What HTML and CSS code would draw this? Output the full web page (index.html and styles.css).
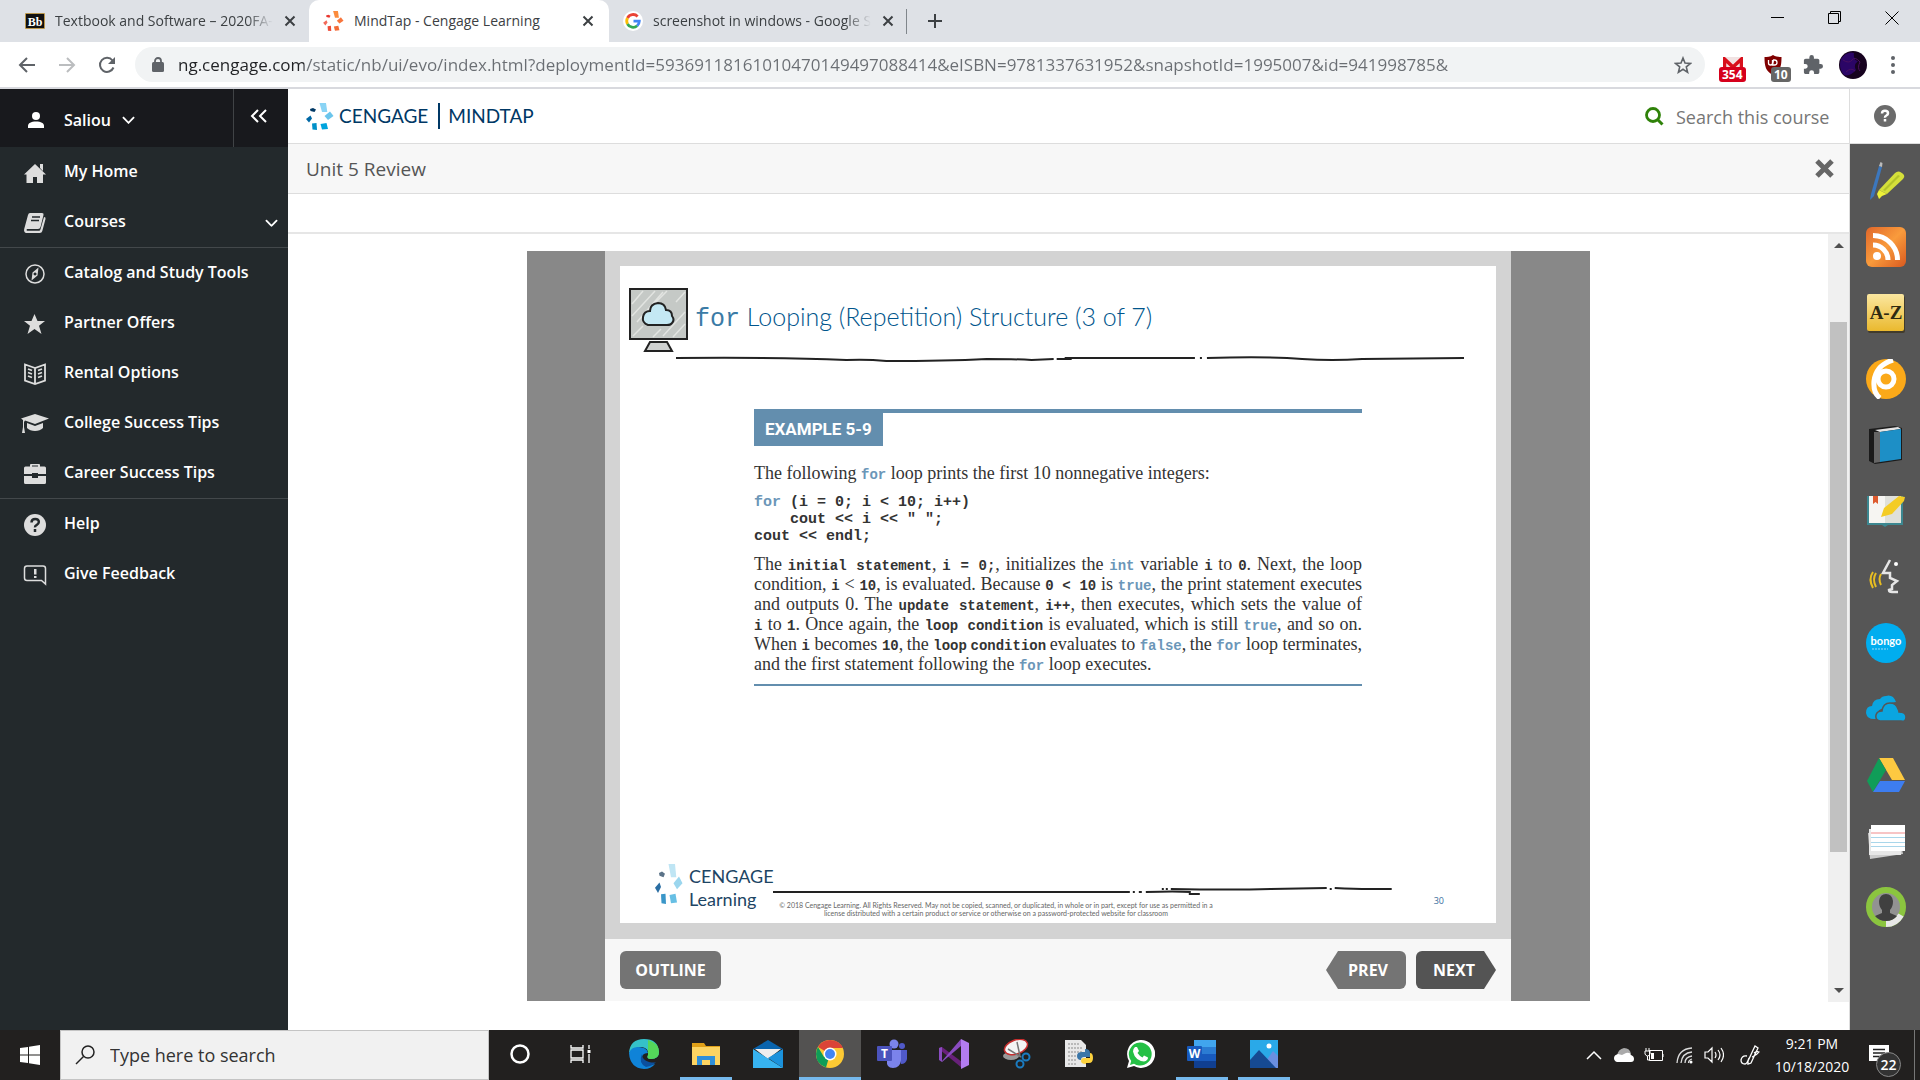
FILE: index.html
```html
<!DOCTYPE html>
<html lang="en">
<head>
<meta charset="utf-8">
<title>MindTap - Cengage Learning</title>
<link rel="stylesheet" href="styles.css">
</head>
<body>
<svg class="defs" width="0" height="0" aria-hidden="true">
  <symbol id="swirl" viewBox="0 0 28 27">
    <path class="s1" d="M13.5 0h6.500l1.300 9h-5.300z"/><path class="s2" d="M18.500 13l5.500-4.500 3.500 4.500-5.500 4z"/>
    <path class="s3" d="M14.500 21l6-1 1.500 6-6 .5z"/><path class="s4" d="M6 20.500l4.500-.5.5 7-4.500-.5z"/>
    <path class="s5" d="M0 16l4.500-3.500 1.500 3-3 4z"/><path class="s6" d="M4 6l3-1 3 1.500-1.500 2.500-4-1z"/>
  </symbol>
  <symbol id="x" viewBox="0 0 12 12"><path d="M1.500 1.500l9 9m0-9l-9 9" fill="none" stroke="currentColor" stroke-width="2"/></symbol>
  <symbol id="chev" viewBox="0 0 14 8"><path d="M1 1l6 6 6-6" fill="none" stroke="currentColor" stroke-width="2"/></symbol>
</svg>

<header class="browser">
  <div class="tabs">
    <div class="tab first">
      <svg class="fav" width="20" height="16" viewBox="0 0 20 16"><rect width="20" height="16" rx="1" fill="#b9964b"/><rect x="1" y="1" width="18" height="14" fill="#111"/><text x="10" y="12.500" text-anchor="middle" font-family="Liberation Serif" font-weight="700" font-size="12" fill="#fff">Bb</text></svg>
      <span class="tab-name fade">Textbook and Software – 2020FA-</span>
      <button class="tab-x" aria-label="Close tab"><svg width="12" height="12"><use href="#x"/></svg></button>
    </div>
    <div class="tab active">
      <svg class="fav orange" width="21" height="20"><use href="#swirl"/></svg>
      <span class="tab-name">MindTap - Cengage Learning</span>
      <button class="tab-x" aria-label="Close tab"><svg width="12" height="12"><use href="#x"/></svg></button>
    </div>
    <div class="tab third">
      <svg class="fav" width="20" height="20" viewBox="0 0 20 20"><circle cx="10" cy="10" r="10" fill="#fff"/><g fill="none" stroke-width="2.800"><path d="M14.600 5.400A6.300 6.300 0 0 0 4.500 7" stroke="#ea4335"/><path d="M4.500 7a6.300 6.300 0 0 0 0 6" stroke="#fbbc05"/><path d="M4.500 13a6.300 6.300 0 0 0 9.700 1.700" stroke="#34a853"/><path d="M14.200 14.700A6.300 6.300 0 0 0 16.300 10.200H10.500" stroke="#4285f4"/></g></svg>
      <span class="tab-name fade">screenshot in windows - Google S</span>
      <button class="tab-x" aria-label="Close tab"><svg width="12" height="12"><use href="#x"/></svg></button>
    </div>
    <button class="new-tab" aria-label="New tab"><svg width="16" height="16" viewBox="0 0 16 16"><path d="M8 1v14M1 8h14" stroke="#3c4043" stroke-width="2"/></svg></button>
    <div class="win">
      <button aria-label="Minimize"><svg width="14" height="14" viewBox="0 0 14 14"><path d="M0 6.500h13" stroke="#000"/></svg></button>
      <button aria-label="Restore"><svg width="14" height="14" viewBox="0 0 14 14"><path d="M.5 2.500h10v10H.5zM2.500 2V.5h10v10H11" fill="none" stroke="#000"/></svg></button>
      <button aria-label="Close"><svg width="14" height="14" viewBox="0 0 14 14"><path d="M.5.5l13 13m0-13l-13 13" stroke="#000"/></svg></button>
    </div>
  </div>
  <div class="toolbar">
    <button class="nav" aria-label="Back"><svg width="18" height="16" viewBox="0 0 18 16"><path d="M17 8H2m7-7L2 8l7 7" fill="none" stroke="#5f6368" stroke-width="2"/></svg></button>
    <button class="nav" aria-label="Forward"><svg width="18" height="16" viewBox="0 0 18 16"><path d="M1 8h15M9 1l7 7-7 7" fill="none" stroke="#bbbdbf" stroke-width="2"/></svg></button>
    <button class="nav" aria-label="Reload"><svg width="18" height="18" viewBox="0 0 18 18"><path d="M15.500 11.500A7 7 0 1 1 14.500 4.500" fill="none" stroke="#5f6368" stroke-width="2"/><path d="M17 1v7h-7z" fill="#5f6368"/></svg></button>
    <div class="omni">
      <svg width="12" height="15" viewBox="0 0 12 15"><rect y="5" width="12" height="10" rx="1.500" fill="#5f6368"/><path d="M3 6V4a3 3 0 0 1 6 0v2" fill="none" stroke="#5f6368" stroke-width="1.800"/></svg>
      <input aria-label="Address" value="ng.cengage.com/static/nb/ui/evo/index.html?deploymentId=59369118161010470149497088414&amp;eISBN=9781337631952&amp;snapshotId=1995007&amp;id=941998785&amp;">
      <button aria-label="Bookmark"><svg width="18" height="18" viewBox="0 0 18 18"><path d="M9 2l2 5 5.500.4-4.200 3.500 1.300 5.400L9 13.300l-4.600 3 1.300-5.400L1.500 7.400 7 7z" fill="none" stroke="#5f6368" stroke-width="1.600"/></svg></button>
    </div>
    <div class="exts">
      <button class="ext" aria-label="Mail, 354"><svg width="20" height="16" viewBox="0 0 20 16"><path d="M0 0h20v16H0z" fill="#f1e3e3"/><path d="M1.500 14V2l8.500 8 8.500-8v12" fill="none" stroke="#d8101c" stroke-width="3.500"/></svg><b class="badge red">354</b></button>
      <button class="ext" aria-label="Blocker, 10"><svg width="20" height="20" viewBox="0 0 20 20"><path d="M10 0c3 2 6 2 8.500 2 0 9-1 14-8.500 18C2.500 16 1.500 11 1.500 2 4 2 7 2 10 0z" fill="#800000"/><path d="M5.500 5v3a2 2 0 0 0 4 0V5m0 5h2a2.500 2.500 0 0 0 0-5h-1z" fill="none" stroke="#fff" stroke-width="1.300"/></svg><b class="badge grey">10</b></button>
      <button class="ext" aria-label="Extensions"><svg width="20" height="20" viewBox="1 1 22 22"><path fill="#5f6368" d="M20.500 11H19V7c0-1.100-.9-2-2-2h-4V3.500a2.500 2.500 0 0 0-5 0V5H4c-1.100 0-2 .9-2 2v3.800h1.500a2.700 2.700 0 0 1 0 5.400H2V20c0 1.100.9 2 2 2h3.800v-1.500a2.700 2.700 0 0 1 5.400 0V22H17c1.100 0 2-.9 2-2v-4h1.500a2.500 2.500 0 0 0 0-5z"/></svg></button>
      <button class="ext" aria-label="Profile"><svg width="28" height="28" viewBox="0 0 28 28"><circle cx="14" cy="14" r="14" fill="#16021f"/><path d="M2 8Q8 0 15 2q-1 7 4 8-5 4-2 9-6 7-12 5Q-1 17 2 8z" fill="#2b0566"/><path d="M4 9q6 4 9 0t8 2q-3 6 0 9M7 21q5-5 9-1" fill="none" stroke="#4a1060"/></svg></button>
      <button class="ext menu" aria-label="Menu"><svg width="4" height="18" viewBox="0 0 4 18" fill="#5f6368"><circle cx="2" cy="2" r="2"/><circle cx="2" cy="9" r="2"/><circle cx="2" cy="16" r="2"/></svg></button>
    </div>
  </div>
</header>

<div class="app">
  <nav class="side">
    <div class="user">
      <button class="who"><svg width="16" height="16" viewBox="0 0 16 16" fill="#fff"><circle cx="8" cy="4" r="4"/><path d="M0 16v-2c0-3 3-4.500 8-4.500s8 1.500 8 4.500v2z"/></svg><span>Saliou</span><svg width="13" height="8"><use href="#chev"/></svg></button>
      <button class="fold" aria-label="Collapse"><svg width="18" height="14" viewBox="0 0 18 14"><path d="M8 1L2 7l6 6M16 1l-6 6 6 6" fill="none" stroke="#fff" stroke-width="2"/></svg></button>
    </div>
    <ul>
      <li><a href="#"><svg viewBox="0 0 24 22"><path d="M12 2l11 10.500h-3V21h-6v-6h-4v6H3.500v-8.500H1zM17 2h3v7l-3-3z"/></svg><span>My Home</span></a></li>
      <li class="line"><a href="#"><svg viewBox="0 0 24 22"><path d="M7 1h12q2 0 1.500 2l-3 12q-.5 2-2.500 2H4q-1 1 0 1.800h12q1 0 1.500-1.500L21 5q2 0 1.500 2l-3.200 12q-.5 2-2.500 2H3q-2.500-1-1.800-4L5 3q.5-2 2-2z"/><path d="M9 5h8M8 8.500h8" stroke="#23292c" stroke-width="1.500"/></svg><span>Courses</span><svg class="more" viewBox="0 0 14 8"><use href="#chev"/></svg></a></li>
      <li><a href="#"><svg viewBox="0 0 24 22"><circle cx="12" cy="11" r="9" fill="none" stroke="#ddd" stroke-width="1.500"/><path d="M15.500 4.500l-1 8-6 5 1-8zM12 9.500a1.500 1.500 0 1 0 .1 0z" fill-rule="evenodd"/></svg><span>Catalog and Study Tools</span></a></li>
      <li><a href="#"><svg viewBox="0 0 24 22"><path d="M11.500 1l3 7h7.500l-6 4.800 2.500 8.200-7-5-7 5L7 12.800 1 8h7.500z"/></svg><span>Partner Offers</span></a></li>
      <li><a href="#"><svg viewBox="0 0 24 22"><path d="M12 5L2 1.500v16L12 21l10-3.500v-16zM12 5v16M5 6l4 1.500M5 9.500l4 1.500M5 13l4 1.500M19 6l-4 1.500M19 9.500L15 11M19 13l-4 1.500" fill="none" stroke="#ddd" stroke-width="1.800"/></svg><span>Rental Options</span></a></li>
      <li><a href="#"><svg class="cap" viewBox="0 0 30 22"><path d="M15 1l14 4.500L15 11 5 7.500 4 9v5l1 6H2l1-6V7L1 5.500zM7 10l8 3 8-3v5q-3 3-8 3t-8-3z"/></svg><span>College Success Tips</span></a></li>
      <li class="line"><a href="#"><svg viewBox="0 0 24 22"><path d="M1 5q0-1.500 1.500-1.500H7V2q0-1 1-1h8q1 0 1 1v1.500h4.500Q23 3.500 23 5v6h-8v-1H9v1H1zm8-1.500h6v-1H9zM1 13h8v2h6v-2h8v6.500q0 1.500-1.500 1.500h-19Q1 21 1 19.500z"/></svg><span>Career Success Tips</span></a></li>
      <li><a href="#"><svg viewBox="0 0 24 22"><circle cx="12" cy="11" r="11"/><path d="M8.500 8.500q0-3.500 3.700-3.500t3.600 3q0 1.800-2 2.800t-1.800 2.500M12 15v3" fill="none" stroke="#23292c" stroke-width="2.500"/></svg><span>Help</span></a></li>
      <li><a href="#"><svg viewBox="0 0 24 22"><path d="M4 2h16q2.500 0 2.500 2.500V20l-4-3.500H4q-2.500 0-2.500-2.500V4.500Q1.500 2 4 2z" fill="none" stroke="#ddd" stroke-width="1.500"/><path d="M11 5h2.500v5.500H11zM11 12h2.500v2H11z"/></svg><span>Give Feedback</span></a></li>
    </ul>
  </nav>

  <div class="main">
    <div class="brandbar">
      <a class="brand" href="#"><svg class="blue" width="28" height="27"><use href="#swirl"/></svg><span class="ceng">CENGAGE</span><span class="mind">MINDTAP</span></a>
      <label class="find"><svg width="19" height="19" viewBox="0 0 19 19"><circle cx="8" cy="8" r="6.500" fill="none" stroke="#2f8209" stroke-width="2.800"/><path d="M12.500 12.500l5 5" stroke="#2f8209" stroke-width="3"/></svg><input placeholder="Search this course" aria-label="Search this course"></label>
      <button class="q" aria-label="Help"><svg width="22" height="22" viewBox="0 0 22 22"><circle cx="11" cy="11" r="11" fill="#6b6b6b"/><path d="M8 8.500Q8 5.800 11 5.800t3 2.500q0 1.400-1.600 2.200t-1.400 2.200M11 14v2.600" fill="none" stroke="#fff" stroke-width="2.500"/></svg></button>
    </div>
    <div class="lower">
      <main class="pane">
        <div class="unit"><h1>Unit 5 Review</h1><button aria-label="Close"><svg width="19" height="19" viewBox="0 0 19 19"><path d="M2 2l15 15m0-15L2 17" stroke="#666" stroke-width="5"/></svg></button></div>
        <div class="strip"></div>
        <div class="scroller">
          <div class="stage">
            <div class="viewer">
              <div class="book">
                <div class="mat">
                  <article class="slide">
                    <div class="slide-head">
                      <svg width="60" height="66" viewBox="0 0 60 66"><rect x="1" y="1" width="57" height="50" fill="#c5c9c6" stroke="#222" stroke-width="2"/><g stroke="#e2e4e1" stroke-width="1.500"><path d="M3 16L14 3M3 28L26 3M8 34L34 4M4 48L14 38M24 17L38 3M34 48l22-24M24 49l8-8M44 49l12-13M47 14l9-10"/></g><path d="M19 37q-6-2-5-8t7-6q0-7 8-8 7 0 8 7 6 0 6 6 3 4 0 7-1 2-5 2z" fill="#c4e8f3" stroke="#222" stroke-width="2"/><path d="M21 54h17l5 9H16z" fill="#cfd1d0" stroke="#222" stroke-width="2"/></svg>
                      <h2><span class="mono">for</span> Looping (Repetition) Structure (3 of 7)</h2>
                    </div>
                    <svg class="rule-top" viewBox="0 0 787 8" preserveAspectRatio="none"><g fill="none" stroke="#222" stroke-width="2"><path d="M0 4q100-1 170 2 20-1 40 1 60 0 100-2 30 0 45 1l22-1M380 5h15M388 4h130M523 4h2M530 4q60-2 95 1 30 2 60 0l102-1"/></g></svg>
                    <section class="example">
                      <h3>EXAMPLE 5-9</h3>
                      <p class="lead">The following <code>for</code> loop prints the first 10 nonnegative integers:</p>
<pre><span><i>for</i> (i = 0; i &lt; 10; i++)</span><span>    cout &lt;&lt; i &lt;&lt; " ";</span><span>cout &lt;&lt; endl;</span></pre>
                      <p class="just"><span>The <b>initial statement</b>, <b>i = 0;</b>, initializes the <code>int</code> variable <b>i</b> to <b>0</b>. Next, the loop</span>
                      <span>condition, <b>i</b> &lt; <b>10</b>, is evaluated. Because <b>0 &lt; 10</b> is <code>true</code>, the print statement executes</span>
                      <span>and outputs 0. The <b>update statement</b>, <b>i++</b>, then executes, which sets the value of</span>
                      <span><b>i</b> to <b>1</b>. Once again, the <b>loop condition</b> is evaluated, which is still <code>true</code>, and so on.</span>
                      <span>When <b>i</b> becomes <b>10</b>,&#8201;the <b>loop</b>&#8201;<b>condition</b>&#8201;evaluates to <code>false</code>,&#8201;the <code>for</code> loop terminates,</span>
                      <span class="end">and the first statement following the <code>for</code> loop executes.</span></p>
                    </section>
                    <footer>
                      <div class="logo"><svg class="pale" width="28" height="40" viewBox="0 0 28 27" preserveAspectRatio="none"><use href="#swirl"/></svg><div>CENGAGE<br>Learning</div></div>
                      <div class="legal"><svg viewBox="0 0 619 12" preserveAspectRatio="none"><g fill="none" stroke="#222" stroke-width="2"><path d="M0 8h357M360 8h2M366 8h3M373 8q30-1 45 0M416 10h11M389 5h2M393 5h2M398 5q60 1 100 0l56-1M557 5h2M562 4q20 1 35 1l22 0"/></g></svg>
                      <p>© 2018 Cengage Learning. All Rights Reserved. May not be copied, scanned, or duplicated, in whole or in part, except for use as permitted in a<br>license distributed with a certain product or service or otherwise on a password-protected website for classroom</p></div>
                      <span class="num">30</span>
                    </footer>
                  </article>
                </div>
                <div class="pager"><button class="btn">OUTLINE</button><button class="btn prev">PREV</button><button class="btn next">NEXT</button></div>
              </div>
            </div>
          </div>
          <div class="bar" aria-hidden="true"><svg width="10" height="6"><path d="M0 5l5-5 5 5z" fill="#505050"/></svg><div class="track"><div class="thumb"></div></div><svg width="10" height="6"><path d="M0 0l5 5 5-5z" fill="#505050"/></svg></div>
        </div>
      </main>
      <aside class="rail">
        <button aria-label="Notes"><svg viewBox="0 0 40 40"><path d="M13 5l3 1-8 29-4 4 1-6z" fill="#3c77bd"/><path d="M13 5l1.500-4 2 1-.5 4z" fill="#bbb"/><path d="M13 29L29 12q4-4 9 2 1 2-1 4L21 33z" fill="#d5e03a"/><path d="M13 29l8 4-5 2-3 3-2-5z" fill="#eef238"/><path d="M17 29L32 14l2 1-15 15z" fill="#b4c32a"/></svg></button>
        <button aria-label="RSS"><svg viewBox="0 0 40 40"><linearGradient id="rs" x2="1" y2="1"><stop stop-color="#e0662a"/><stop offset=".5" stop-color="#f99b3c"/><stop offset="1" stop-color="#d9591f"/></linearGradient><rect width="40" height="40" rx="6" fill="url(#rs)"/><circle cx="11" cy="29" r="4" fill="#fff"/><path d="M7 18a15 15 0 0 1 15 15M7 8.500A24.500 24.500 0 0 1 31.500 33" fill="none" stroke="#fff" stroke-width="5"/></svg></button>
        <button aria-label="Glossary"><svg viewBox="0 0 40 40"><linearGradient id="az" x2="0" y2="1"><stop stop-color="#fbe7a0"/><stop offset="1" stop-color="#eab92e"/></linearGradient><rect x="2" y="3" width="37" height="37" rx="2" fill="#413b2c"/><rect x="1" y="1" width="37" height="37" rx="2" fill="url(#az)"/><text x="20" y="26" text-anchor="middle" font-family="Liberation Serif" font-weight="700" font-size="19" fill="#2e2a12">A-Z</text></svg></button>
        <button aria-label="Kaltura"><svg viewBox="0 0 40 40"><circle cx="20" cy="20" r="20" fill="#fba919"/><path d="M27 1Q10 6 8 22q-1 12 6 17" fill="none" stroke="#fff" stroke-width="5"/><circle cx="20" cy="20" r="8" fill="none" stroke="#fff" stroke-width="5"/></svg></button>
        <button aria-label="Book"><svg viewBox="0 0 40 40"><path d="M3 4l26-3 7 2v32L9 39l-6-3z" fill="#1b1b1b"/><path d="M9 5l23-3 3 2-21 3z" fill="#e5e5e5"/><path d="M8 7l6 0v30l-6 1z" fill="#666"/><path d="M14 7l21-3v30l-21 3z" fill="#1d8fc6"/></svg></button>
        <button aria-label="Reader"><svg viewBox="0 0 40 40"><path d="M1 5h36v29H22l-3 2-3-2H1z" fill="#3c8790"/><path d="M3 5h16v27H3z" fill="#f6f5f2"/><path d="M19 5h16v27H19z" fill="#dfe0da"/><path d="M7 5h5v8l-2.500-2L7 13z" fill="#dd5a2e"/><path d="M15 26l3-9L33 5l6 1-1 4-12 13z" fill="#f4cc25"/></svg></button>
        <button aria-label="Read aloud"><svg viewBox="0 0 40 40"><path d="M24 3l-7 13h7v5l7 3-5 4v4l-3 1q0 2 3 2h6" fill="none" stroke="#e6e6e6" stroke-width="2.500"/><circle cx="30" cy="7" r="2" fill="#fff"/><path d="M15 17q-3 5 0 11M10 16q-4 6 0 14M7 15q-5 7 0 16" fill="none" stroke="#e8bd21" stroke-width="2"/></svg></button>
        <button aria-label="Bongo"><svg viewBox="0 0 40 40"><circle cx="20" cy="20" r="20" fill="#00adef"/><text x="20" y="22" text-anchor="middle" font-family="Lato" font-weight="700" font-size="11" fill="#fff">bongo</text><path d="M6 26h16" stroke="#9bdcf7" stroke-dasharray="2 1"/></svg></button>
        <button aria-label="OneDrive"><svg viewBox="0 0 40 40"><path d="M8 30q-7 0-8-6 0-7 6-7 1-7 8-7 2-3 6-3 7-2 10 6-9 0-11 6-8 1-8 7 0 3 2 4z" fill="#0aa5e0"/><path d="M14 32q-5-1-4-6 1-4 6-4 1-8 8-8 6 0 8 6 1 2 1 3 7 0 7 5t-5 4z" fill="#0aa5e0" stroke="#565656" stroke-width="1.500"/></svg></button>
        <button aria-label="Google Drive"><svg viewBox="0 0 40 40"><path d="M13 3h14l12 22H26z" fill="#fdc941"/><path d="M13 3l7 12L7 37 1 26z" fill="#109d58"/><path d="M14 26h25l-6 11H7z" fill="#3d7df0"/></svg></button>
        <button aria-label="Flashcards"><svg viewBox="0 0 40 40"><path d="M2 12l30-4 5 25-33 5z" fill="#ccc"/><path d="M3 8h32v26H3z" fill="#e7e7e7"/><path d="M5 4h34v26H5z" fill="#fff"/><path d="M5 12h34" stroke="#f08b8b"/><path d="M5 16.500h34M5 21.500h34M5 25.500h34" stroke="#a9d6ea"/></svg></button>
        <button aria-label="Profile"><svg viewBox="0 0 40 40"><circle cx="20" cy="20" r="17" fill="#929292" stroke="#8bc53f" stroke-width="6"/><path d="M35 28q-5 9-15 9" fill="none" stroke="#e8e8e8" stroke-width="6"/><path d="M13 14q1-7 7-7t7 7q0 6-3 9v3l7 3q-4 5-11 5T9 29l7-3v-3q-3-3-3-9z" fill="#404040"/></svg></button>
      </aside>
    </div>
  </div>
</div>

<div class="taskbar">
  <button class="start" aria-label="Start"><svg width="20" height="20" viewBox="0 0 20 20" fill="#fff"><path d="M0 3l8-1v7.500H0zM9 1.800L20 0v9.500H9zM0 10.500h8V18l-8-1zM9 10.500h11V20L9 18.200z"/></svg></button>
  <label class="tsearch"><svg width="20" height="20" viewBox="0 0 20 20"><circle cx="13" cy="7" r="6" fill="none" stroke="#222" stroke-width="1.500"/><path d="M8.500 11.500L1 19" stroke="#222" stroke-width="1.500"/></svg><input placeholder="Type here to search" aria-label="Type here to search"></label>
  <div class="apps">
    <button aria-label="Cortana"><svg viewBox="0 0 30 30"><circle cx="15" cy="15" r="8.500" fill="none" stroke="#fff" stroke-width="2.500"/></svg></button>
    <button aria-label="Task view"><svg viewBox="0 0 30 30"><path d="M4 6v3h12V6M4 24v-3h12v3M4 11h12v8H4zM22 6v4M22 15v9" fill="none" stroke="#fff" stroke-width="1.300"/><path d="M20.500 11h3v3h-3z" fill="#fff"/></svg></button>
    <button aria-label="Edge"><svg viewBox="0 0 30 30"><path d="M0 14Q1 0 15 0q14 0 15 13 0 7-8 7-5 0-3-4 1-7-6-8Q4 8 0 14z" fill="#35c1c9"/><path d="M19 1q11 3 11 12 0 7-8 7-5 0-3-4z" fill="#54d65a"/><path d="M0 14q2-6 9-6 9 0 10 6-7 0-6 7 2 7 13 4-4 5-11 5Q1 29 0 14z" fill="#0f83d8"/><path d="M13 15q-4 9 4 13 7-1 10-5-2 1-7 0-7-2-7-8z" fill="#0b4f9e"/></svg></button>
    <button class="open file" aria-label="File Explorer"><svg viewBox="0 0 30 30"><path d="M1 4h12l2 3h14v5H1z" fill="#e0a018"/><path d="M1 8h28v18H1z" fill="#fcd462"/><path d="M6 17h18v9h-5v-5h-8v5H6z" fill="#2f8fd8"/></svg></button>
    <button aria-label="Mail"><svg viewBox="0 0 30 30"><path d="M0 10l15-9 15 9z" fill="#0a64ad"/><path d="M2 10h26l-13 10z" fill="#eee"/><path d="M0 10l30 19H0z" fill="#37b3f0"/><path d="M30 10L15 19l15 10z" fill="#1b92dc"/></svg></button>
    <button class="open on" aria-label="Chrome"><svg viewBox="0 0 30 30"><circle cx="15" cy="15" r="14" fill="#fcc934"/><path d="M15 15L3 8Q7 1 15 1q9 0 13 8H15z" fill="#db4437"/><path d="M15 15l-4 13.500Q1 25 1 15q0-4 2-7l6 10z" fill="#0f9d58"/><circle cx="15" cy="15" r="6.500" fill="#fff"/><circle cx="15" cy="15" r="5" fill="#4285f4"/></svg></button>
    <button aria-label="Teams"><svg viewBox="0 0 30 30"><circle cx="17" cy="5" r="4.500" fill="#7b83eb"/><circle cx="25" cy="7" r="3" fill="#5059c9"/><path d="M20 11h10v9q-1 5-6 5z" fill="#5059c9"/><path d="M10 11h14v10q-1 8-8 8t-6-8z" fill="#7b83eb"/><rect y="7" width="15" height="15" rx="1" fill="#4b53bc"/><text x="7.500" y="19" text-anchor="middle" font-family="Open Sans" font-weight="700" font-size="12" fill="#fff">T</text></svg></button>
    <button aria-label="Visual Studio"><svg viewBox="0 0 30 30"><path d="M0 9l3-1L23 23v6L0 10z" fill="#68217a"/><path d="M0 9v12l3 2L22 7V0L3 22V8z" fill="#8a4cc0"/><path d="M22 0l8 4v22l-8 4z" fill="#b27cf0"/></svg></button>
    <button aria-label="Snipping Tool"><svg viewBox="0 0 30 30"><ellipse cx="10" cy="17" rx="8" ry="4" fill="#999"/><ellipse cx="15" cy="8" rx="12" ry="7" fill="#f4f4f4" stroke="#c82e2e" stroke-width="1.500" transform="rotate(-20 15 8)"/><path d="M16 3l3 14M7 10l13 8" stroke="#777" stroke-width="1.500"/><g fill="none" stroke="#1b7bc0" stroke-width="2"><circle cx="25" cy="18" r="3.500"/><circle cx="19" cy="25" r="3.500"/></g></svg></button>
    <button aria-label="Python file"><svg viewBox="0 0 30 30"><path d="M2 1h16l5 5v22H2z" fill="#e8e8e8"/><path d="M5 5h11M5 9h14M5 13h14M5 17h9M5 21h9M5 25h9" stroke="#8a8a8a" stroke-dasharray="2 1"/><path d="M22 10q5 0 5 4v4h-6q-3 0-3 3-4 0-4-4t5-4h3z" fill="#3a76a8"/><path d="M27 14q3 0 3 5t-4 5h-3v1q-5 0-5-3t3-3h6z" fill="#fcd13d"/></svg></button>
    <button aria-label="WhatsApp"><svg viewBox="0 0 30 30"><path d="M15 1a14 14 0 1 1-6 26l-7 2 2-7A14 14 0 0 1 15 1z" fill="#fff"/><path d="M15 3.500a11.500 11.500 0 1 1-6 21.200l-4 1.200 1.200-4A11.500 11.500 0 0 1 15 3.500z" fill="#25c045"/><path d="M10 8h2l2 4-1.500 2q2 3 5 4.500l1.500-2 4 2q0 3-4 4-9-1-11-10 0-3 2-4.500z" fill="#fff"/></svg></button>
    <button class="open" aria-label="Word"><svg viewBox="0 0 30 30"><path d="M7 1h22v7H7z" fill="#41a5ee"/><path d="M7 8h22v7H7z" fill="#2b7cd3"/><path d="M7 15h22v7H7z" fill="#185abd"/><path d="M7 22h22v7H7z" fill="#103f91"/><rect y="7" width="15" height="15" rx="1" fill="#185abd"/><text x="7.500" y="19" text-anchor="middle" font-family="Open Sans" font-weight="700" font-size="12" fill="#fff">W</text></svg></button>
    <button class="open" aria-label="Photos"><svg viewBox="0 0 30 30"><path d="M1 1h28v28H1z" fill="#2aa9e8"/><path d="M12 29L24 12l5 5v12z" fill="#6a8fe0"/><path d="M1 21l9-10 17 18H1z" fill="#164a92"/><circle cx="20" cy="7" r="2.500" fill="#fff"/></svg></button>
  </div>
  <div class="tray">
    <button aria-label="Hidden icons"><svg width="16" height="10" viewBox="0 0 16 10"><path d="M1 9l7-7 7 7" fill="none" stroke="#fff" stroke-width="1.500"/></svg></button>
    <button aria-label="OneDrive"><svg width="20" height="14" viewBox="0 0 20 14"><path d="M3 8q1-7 7-8 6 0 7 6z" fill="#aaa"/><path d="M3 14q-3-1-3-4t4-4l4 1 4-2q4-1 5 2 3 1 3 4t-3 3z" fill="#fff"/></svg></button>
    <button aria-label="Battery"><svg width="20" height="16" viewBox="0 0 20 16"><path d="M5.500 3.500h13v10h-13zM19 7v3M1 4h5v3q-1 2-2.500 2T1 7zM2 1v3M5 1v3M3.500 9v4H6" fill="none" stroke="#fff"/><path d="M7 6h3v6H7z" fill="#fff"/></svg></button>
    <button aria-label="Network"><svg width="17" height="17" viewBox="0 0 17 17"><path d="M1 16Q2 2 16 1M5 16q1-10 11-11M9 16q0-6 7-7M12.500 16q0-3 3.500-4" fill="none" stroke="#ddd" stroke-width="1.300"/><circle cx="15" cy="15" r="1.500" fill="#fff"/></svg></button>
    <button aria-label="Volume"><svg width="20" height="18" viewBox="0 0 20 18"><path d="M1 6h3l4-4v14l-4-4H1zM11 6q2 3 0 6M14 4q4 5 0 10M17 2q5 7 0 14" fill="none" stroke="#fff" stroke-width="1.200"/></svg></button>
    <button class="pen" aria-label="Pen"><svg width="20" height="20" viewBox="0 0 20 20"><path d="M8 16L15 1l3 2-7 15-3 1zM7 11q-5-1-6 4 0 4 4 4 2 0 4-6M12 12q5-2 7-5-2-1-5 1" fill="none" stroke="#fff" stroke-width="1.300"/></svg></button>
    <div class="clock"><time>9:21 PM</time><time>10/18/2020</time></div>
    <button class="note" aria-label="22 notifications"><svg width="20" height="20" viewBox="0 0 20 20"><path d="M0 0h20v16h-7l-3 3v-3H0z" fill="#fff"/><path d="M4 4.500h12M4 8h12M4 11.500h8" stroke="#222" stroke-width="1.300"/></svg><b>22</b></button>
  </div>
</div>
</body>
</html>
```
FILE: styles.css
```css
* { box-sizing: border-box; }
body { margin: 0; min-height: 100vh; display: flex; flex-direction: column; font-family: "Open Sans", "Noto Sans", sans-serif; background: #fff; color: #333; }
button { border: 0; padding: 0; background: none; font: inherit; color: inherit; display: flex; align-items: center; justify-content: center; }
input { border: 0; padding: 0; background: none; font: inherit; color: inherit; min-width: 0; outline: 0; }
svg { display: block; flex: none; }
a { color: inherit; text-decoration: none; }
.defs { position: absolute; }

.blue { --a: #8ad4f5; --b: #6bc5ec; --c: #00a4dd; --d: #0090c8; --e: #0068a5; --f: #003865; }
.orange { --a: #fb8b3c; --b: #f8753c; --c: #f36b36; --d: #ee4a36; --e: #f26a5a; --f: #e8372f; }
.pale { --a: #bfe5f4; --b: #9bd6ee; --c: #67bfe4; --d: #3a96c8; --e: #2a6ea3; --f: #5b7388; }
.s1 { fill: var(--a); } .s2 { fill: var(--b); } .s3 { fill: var(--c); } .s4 { fill: var(--d); } .s5 { fill: var(--e); } .s6 { fill: var(--f); }

/* browser frame */
.browser { border-bottom: 2px solid #d8d9de; }
.tabs { display: flex; height: 42px; background: #dee1e6; color: #3c4043; font-size: 14px; }
.tab { display: flex; align-items: center; height: 42px; }
.tab.first { width: 309px; padding: 0 12px 0 25px; }
.tab.active { width: 300px; padding: 0 14px; background: #fff; border-radius: 10px 10px 0 0; }
.tab.third { width: 298px; padding: 0 12px 0 14px; position: relative; }
.tab.third::after { content: ""; position: absolute; right: 0; top: 9px; height: 25px; width: 1px; background: #80868b; }
.fav { margin-right: 10px; }
.tab-name { flex: 1; white-space: nowrap; overflow: hidden; padding-bottom: 2px; }
.fade { -webkit-mask-image: linear-gradient(90deg, #000 88%, transparent); mask-image: linear-gradient(90deg, #000 88%, transparent); }
.tab-x { width: 14px; margin-left: 10px; }
.new-tab { width: 56px; }
.win { margin-left: auto; display: flex; height: 36px; }
.win button { width: 57px; }
.toolbar { display: flex; align-items: center; height: 45px; padding-left: 7px; }
.nav { width: 40px; }
.omni { flex: 1; margin-left: 8px; height: 35px; border-radius: 18px; background: #f1f3f4; display: flex; align-items: center; padding: 0 13px 0 17px; gap: 14px; }
.omni input { flex: 1; font-size: 17px; color: transparent; background: linear-gradient(90deg, #202124 126px, #6a6e73 126px); background-clip: text; -webkit-background-clip: text; }
.exts { display: flex; align-items: center; padding: 0 8px; }
.ext { width: 40px; height: 36px; position: relative; }
.badge { position: absolute; left: 6px; bottom: 1px; padding: 0 3px; border-radius: 3px; color: #fff; font-size: 12px; line-height: 15px; }
.red { background: #d6001c; }
.grey { background: #666; left: 18px; }
.menu { width: 39px; }

/* application */
.app { flex: 1; display: flex; }
.side { width: 288px; background: #23292c; color: #fff; font-weight: 600; }
.user { display: flex; height: 58px; background: #18191d; font-size: 16px; }
.who { flex: 1; justify-content: flex-start; padding: 4px 0 0 28px; }
.who span { margin: 0 11px 0 20px; }
.fold { width: 55px; border-left: 1px solid #404346; padding: 0 5px 4px 0; }
.side ul { list-style: none; margin: 0; padding: 0; }
.side li { height: 50px; font-size: 16px; }
.side .line { border-bottom: 1px solid #43484b; height: 51px; }
.side a { display: flex; align-items: center; height: 48px; padding: 0 10px 0 23px; }
.side a svg { width: 24px; height: 22px; fill: #ddd; margin: 4px 17px 0 0; }
.side a .cap { width: 30px; margin-left: -3px; margin-right: 14px; }
.side a .more { width: 13px; height: 8px; margin: 4px 0 0 auto; }
.main { flex: 1; min-width: 0; display: flex; flex-direction: column; }
.brandbar { display: flex; height: 55px; border-bottom: 1px solid #ddd; }
.brand { display: flex; align-items: center; padding-left: 18px; color: #003865; font-family: Lato, sans-serif; font-size: 19px; line-height: 26px; }
.ceng { margin-left: 5px; padding-right: 10px; border-right: 2px solid #003865; }
.mind { margin-left: 8px; }
.find { margin-left: auto; display: flex; align-items: center; gap: 12px; padding-right: 12px; font-size: 18px; }
.find input { width: 161px; padding-top: 2px; }
.find input::placeholder { color: #767676; opacity: 1; }
.q { width: 71px; border-left: 1px solid #ddd; }
.lower { flex: 1; display: flex; }
.pane { flex: 1; min-width: 0; display: flex; flex-direction: column; border-right: 1px solid #ddd; }
.unit { display: flex; align-items: center; justify-content: space-between; height: 50px; padding: 0 15px 0 18px; background: #f7f7f7; border-bottom: 1px solid #ddd; }
.unit h1 { margin: 0; font-size: 19px; font-weight: 400; color: #555; }
.strip { height: 40px; border-bottom: 2px solid #e6e6e6; }
.scroller { flex: 1; display: flex; margin-bottom: 28px; }
.stage { flex: 1; min-width: 0; padding: 17px 0 0; }
.viewer { max-width: 1063px; margin: 0 auto; background: #888; }
.book { max-width: 906px; margin: 0 auto; background: #d3d3d3; }
.mat { padding: 15px 15px 16px; }
.slide { min-height: 657px; background: #fff; display: flex; flex-direction: column; }
.slide-head { display: flex; gap: 6px; padding: 22px 0 0 9px; height: 88px; }
.slide h2 { margin: 12px 0 0; font: 300 25px/32px Lato, sans-serif; color: #00558c; }
.mono { font-family: "Liberation Mono", monospace; font-weight: 400; color: #3b7ba6; }
.rule-top { margin-left: 56px; width: 90%; height: 8px; }
.example { margin: 47px 134px 0 134px; border-top: 4px solid #638eae; border-bottom: 2px solid #638eae; font: 18px/20px "Liberation Serif", serif; color: #333; }
.example h3 { margin: 0; width: max-content; padding: 0 11px 1px 11px; background: #638eae; color: #fff; font: 700 17px/32px Roboto, sans-serif; }
.lead { margin: 17px 0 9px; }
.example pre { margin: 0 0 9px; font: 700 15px/17px "Liberation Mono", monospace; }
.example pre span { display: block; }
.example pre i { font-style: normal; color: #6b96b8; }
.example b, .example code { font: 700 14px/20px "Liberation Mono", monospace; }
.example code { color: #6b96b8; }
.just { margin: 0 0 10px; }
.just span { display: block; height: 20px; white-space: nowrap; text-align-last: justify; }
.just .end { text-align-last: left; }
.slide footer { margin-top: auto; display: flex; padding: 0 52px 0 35px; height: 59px; }
.logo { display: flex; gap: 6px; width: 118px; color: #1d4564; font: 18px/23px Lato, sans-serif; }
.logo div { padding-top: 1px; }
.legal { flex: 1; padding-top: 20px; }
.legal svg { width: 100%; height: 12px; }
.legal p { margin: 5px 0 0; width: 446px; text-align: center; font: 7px/8px Lato, sans-serif; color: #666; white-space: nowrap; }
.num { margin: 30px 0 0 42px; font-size: 9px; line-height: 14px; color: #3a6f9e; }
.pager { display: flex; gap: 10px; padding: 12px 15px; background: #f7f7f7; }
.btn { height: 38px; width: 80px; border-radius: 6px; background: #747474; color: #fff; font-weight: 700; font-size: 16px; }
.btn:first-child { width: 101px; margin-right: auto; }
.prev { clip-path: polygon(12px 0, 100% 0, 100% 100%, 12px 100%, 0 50%); padding-left: 4px; }
.next { clip-path: polygon(0 0, 68px 0, 100% 50%, 68px 100%, 0 100%); background: #545454; padding-right: 4px; }
.bar { width: 21px; background: #f0f0f0; display: flex; flex-direction: column; align-items: center; padding: 9px 0 8px; }
.track { flex: 1; width: 17px; margin: 12px 0; padding: 61px 0 124px; display: flex; }
.thumb { flex: 1; background: #c1c1c1; }
.rail { width: 70px; background: #565656; display: flex; flex-direction: column; align-items: center; gap: 26px; padding: 17px 0 0 2px; }
.rail button, .rail svg { width: 40px; height: 40px; }

/* taskbar */
.taskbar { display: flex; height: 50px; background: #22201f; color: #fff; }
.start { width: 60px; }
.tsearch { width: 429px; border: 1px solid #c4c4c4; background: #f1f1f1; display: flex; align-items: center; gap: 15px; padding-left: 14px; font-size: 18px; }
.tsearch input { flex: 1; }
.tsearch input::placeholder { color: #333; opacity: 1; }
.apps { display: flex; }
.apps button { width: 62px; border-bottom: 3px solid transparent; }
.apps button svg { width: 30px; height: 30px; }
.apps .open { width: 52px; margin: 0 5px; border-color: #76b9ed; }
.apps .on { width: 62px; margin: 0; background: #535251; }
.tray { margin-left: auto; display: flex; align-items: center; gap: 10px; padding-right: 5px; }
.tray > button { width: 20px; }
.tray .pen { margin-left: 6px; }
.clock { display: grid; justify-items: center; width: 76px; margin-left: 4px; font-size: 14px; line-height: 23px; }
.tray .note { position: relative; width: 46px; height: 50px; margin-left: 9px; border-right: 1px solid #777; justify-content: flex-start; }
.note b { position: absolute; left: 7px; top: 22px; width: 25px; height: 25px; border: 1px solid #888; border-radius: 50%; background: #333; font-size: 14px; font-weight: 600; line-height: 23px; }
```
